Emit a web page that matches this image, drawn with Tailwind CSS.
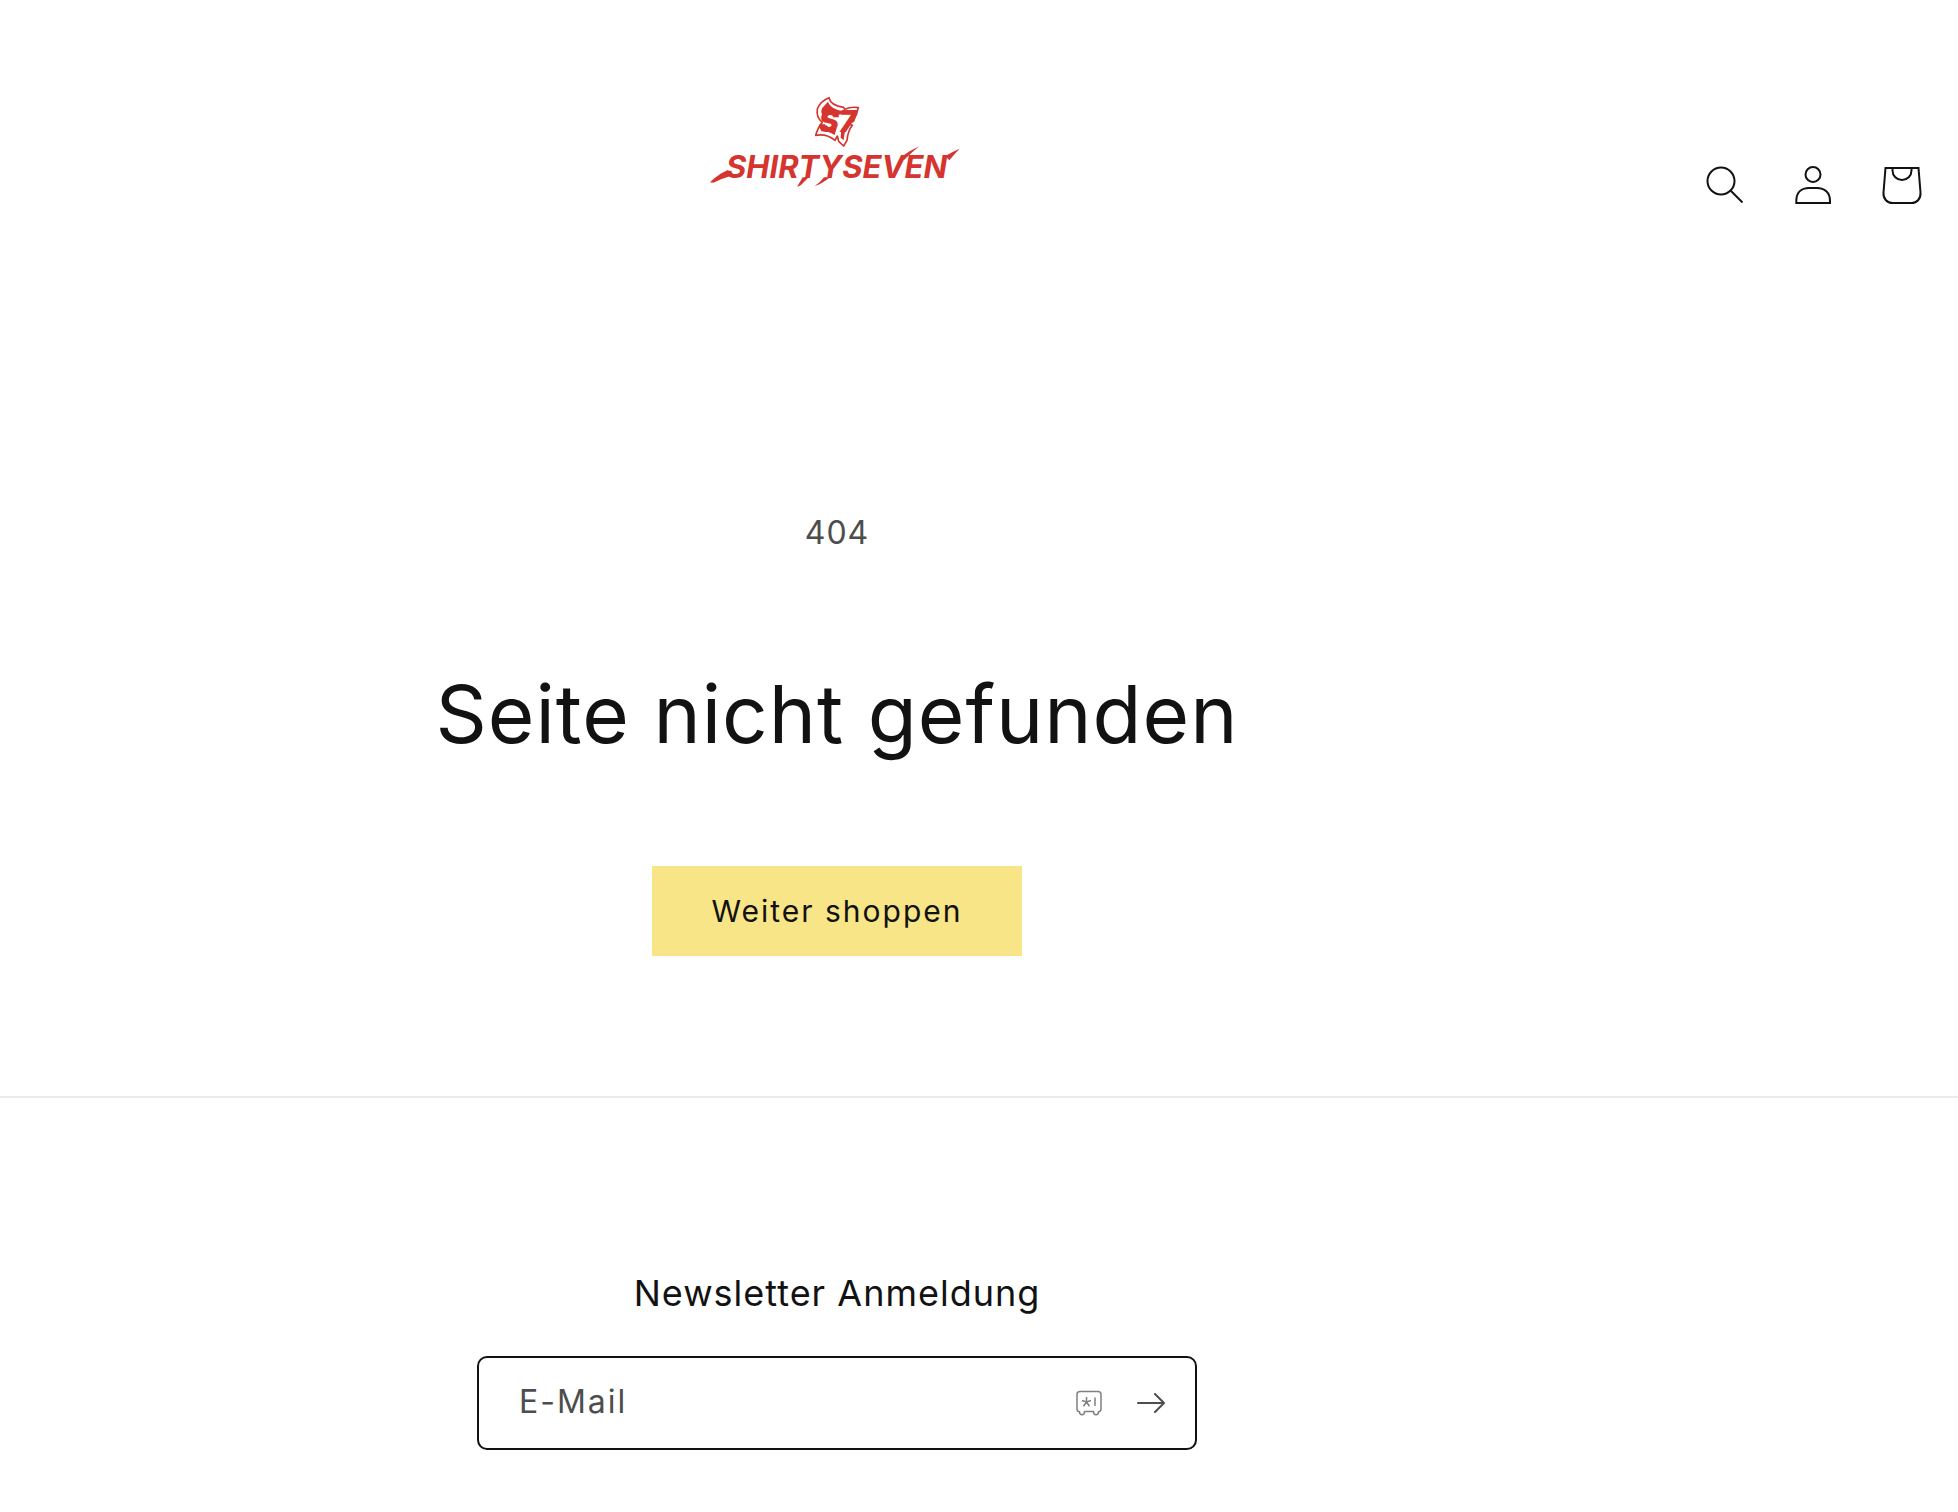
<!DOCTYPE html>
<html lang="de">
<head>
    <meta charset="UTF-8">
    <meta name="viewport" content="width=device-width, initial-scale=1.0">
    <title>404 Seite nicht gefunden – SHIRTYSEVEN</title>
    <script src="https://cdn.jsdelivr.net/npm/@tailwindcss/browser@4"></script>
</head>
<body class="bg-white text-[#121212] font-['Inter',sans-serif] tracking-[1px]">
    <!-- Header -->
    <header class="grid grid-cols-[1fr_272px] items-start pt-[85px] pr-3">
        <a href="#" class="justify-self-center" aria-label="SHIRTYSEVEN">
            <svg class="w-[270px] h-[115px]" viewBox="6 0 810 345" fill="#d5342f">
                <!-- Emblem -->
                <path d="M387 38C390 54 407 64 431 67L434 73Q454 64 475 68L461 108L445 117L457 121Q444 137 441 166L431 183L416 169L412 153L405 166Q380 145 347 151Q354 126 367 112Q348 98 352 72Q361 48 387 38Z" fill="#fff" stroke="#d5342f" stroke-width="5" stroke-linejoin="round"/>
                <path d="M384 50C389 64 404 74 428 78L432 84L408 92Q380 86 372 96Q360 84 366 70Z"/>
                <path d="M362 139Q368 126 378 120Q392 134 410 130L404 150Q384 136 362 139Z"/>
                <path d="M424 132L438 126Q433 146 431 166L422 158Z"/>
                <text x="356" y="141" font-family="Inter, sans-serif" font-weight="900" font-style="italic" font-size="90" letter-spacing="0">S7</text>
                <!-- Wordmark with brush tails -->
                <text x="78" y="279" font-family="Inter, sans-serif" font-size="93" font-weight="700" font-style="italic" letter-spacing="0">SHIRTYSEVEN</text>
                <path d="M30 292Q52 269 84 255L94 272Q66 280 40 293Z"/>
                <path d="M308 277L291 306L302 301L326 277Z"/>
                <path d="M372 277Q362 292 344 303Q366 297 390 277Z"/>
                <path d="M602 217Q630 196 658 184Q638 200 612 225Z"/>
                <path d="M736 213Q757 200 779 191Q764 206 748 226Z"/>
            </svg>
        </a>
        <nav class="flex justify-end mt-14">
            <button type="button" class="size-[88px] grid place-items-center" aria-label="Suchen">
                <svg class="size-11" viewBox="0 0 44 44" fill="none" stroke="#121212" stroke-width="2">
                    <circle cx="17" cy="18" r="13.5"/>
                    <path d="M26.5 27.5L38.5 39.5"/>
                </svg>
            </button>
            <a href="#" class="size-[88px] grid place-items-center" aria-label="Einloggen">
                <svg class="size-11" viewBox="0 0 44 44" fill="none" stroke="#121212" stroke-width="2">
                    <circle cx="21" cy="11.5" r="7.5"/>
                    <path d="M4.300 40V38C4.300 29.500 9.500 25 17 25H25C32.500 25 38 29.500 38 38V40Z"/>
                </svg>
            </a>
            <a href="#" class="size-[88px] grid place-items-center" aria-label="Warenkorb">
                <svg class="size-11" viewBox="0 0 44 44" fill="none" stroke="#121212" stroke-width="2">
                    <path d="M5.500 5H38.500L40.500 29.500C41 35.500 37 40 31.500 40H12.500C7 40 3 35.500 3.500 29.500Z"/>
                    <path d="M12.500 5V7.500A9.500 9.500 0 0 0 31.500 7.500V5"/>
                </svg>
            </a>
        </nav>
    </header>

    <!-- 404 -->
    <main class="flex flex-col items-center pt-[276px] pb-[140px] pr-[284px] text-center">
        <p class="text-[32px] leading-[56px] text-[#4d4d4d]">404</p>
        <h1 class="mt-[101px] text-[80px] leading-[104px]">Seite nicht gefunden</h1>
        <a href="#" class="mt-[100px] h-[90px] px-[59px] flex items-center bg-[#f8e587] text-[30px] tracking-[2px]">Weiter shoppen</a>
    </main>

    <!-- Newsletter -->
    <footer class="border-t-2 border-[#ebebeb] pb-[62px]">
        <div class="flex flex-col items-center pt-[171px] pr-[284px]">
            <h2 class="text-[36px] leading-[48px]">Newsletter Anmeldung</h2>
            <form class="relative mt-[39px] w-full max-w-[720px] h-[94px] flex items-center border-2 border-[#121212] rounded-[10px]">
                <input id="email" type="email" class="peer flex-1 min-w-0 h-full pl-10 text-[32px] tracking-[2px] outline-none" placeholder=" ">
                <label for="email" class="absolute left-10 top-4 text-[32px] leading-[56px] tracking-[2px] text-[#4d4d4d] peer-not-placeholder-shown:hidden">E-Mail</label>
                <svg class="size-[26px]" viewBox="0 0 26 26" fill="none" stroke="#808080" stroke-width="1.500">
                    <path d="M4 1.500H22Q25 1.500 25 4.500V19Q25 21.500 22.500 21.800Q22.500 24.800 20 24.800Q17.500 24.800 17.500 21.500H8.500Q8.500 24.800 6 24.800Q3.500 24.800 3.500 21.800Q1 21.500 1 19V4.500Q1 1.500 4 1.500Z" stroke-linejoin="round"/>
                    <path d="M10.500 7V12M6 10.500L10.500 12L15 10.500M7.500 16.300L10.500 12L13.500 16.300M19 7.500V16"/>
                </svg>
                <button type="submit" class="w-[93px] h-full pl-1 grid place-items-center" aria-label="Abonnieren">
                    <svg class="w-7 h-5" viewBox="0 0 28 20" fill="none" stroke="#4d4d4d" stroke-width="2" stroke-linecap="round" stroke-linejoin="round">
                        <path d="M1 10H27M18 1L27 10L18 19"/>
                    </svg>
                </button>
            </form>
        </div>
    </footer>
</body>
</html>
